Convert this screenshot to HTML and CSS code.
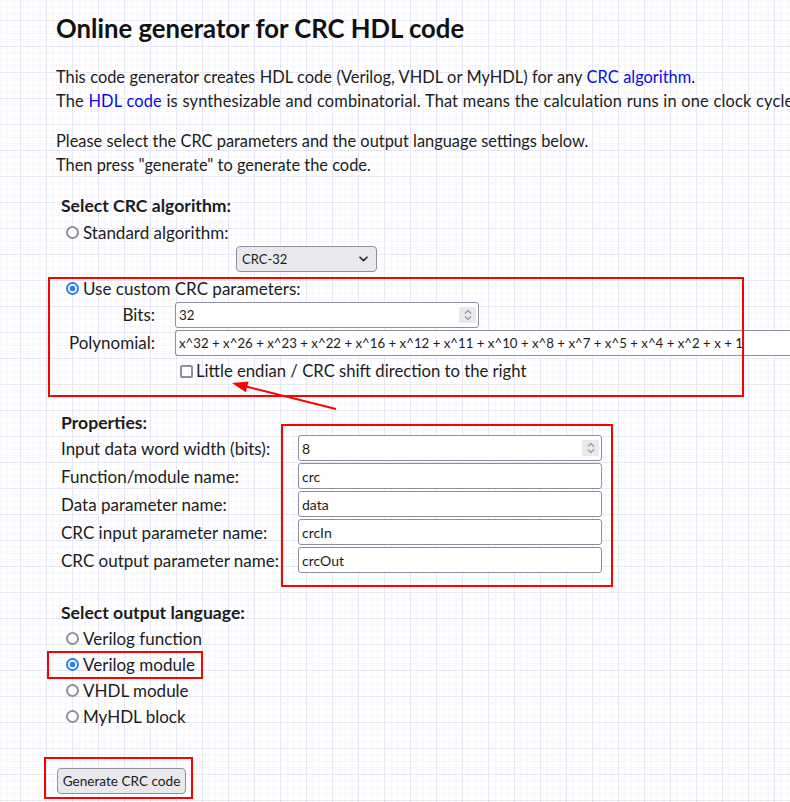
FILE: index.html
```html
<!DOCTYPE html>
<html lang="en">
<head>
<meta charset="utf-8">
<title>Online generator for CRC HDL code</title>
<link rel="stylesheet" href="styles.css">
</head>
<body>
<div class="page">
  <h1 class="title">Online generator for CRC HDL code</h1>
  <p class="intro">This code generator creates HDL code (Verilog, VHDL or MyHDL) for any <a href="#" class="link">CRC algorithm</a>.<br><span class="wide">The <a href="#" class="link">HDL code</a> is synthesizable and combinatorial. That means the calculation runs in one clock cycle.</span></p>
  <p class="intro second">Please select the CRC parameters and the output language settings below.<br>Then press "generate" to generate the code.</p>

  <form class="form">
    <div class="group">
      <div class="group-title">Select CRC algorithm:</div>
      <label class="opt"><input type="radio" name="alg" class="radio">Standard algorithm:</label>
      <div class="select-row">
        <div class="select"><span>CRC-32</span>
          <svg class="chev" width="9" height="6" viewBox="0 0 9 6"><path d="M1 1.2 L4.5 4.6 L8 1.2" fill="none" stroke="#222" stroke-width="1.6" stroke-linecap="round" stroke-linejoin="round"/></svg>
        </div>
      </div>
      <label class="opt"><input type="radio" name="alg" class="radio" checked>Use custom CRC parameters:</label>
      <div class="params">
        <span class="plabel">Bits:</span>
        <div class="field num bits"><input class="inp small" value="32">
          <span class="spin"><svg width="8" height="12" viewBox="0 0 8 12"><path d="M1 4.5 L4 1.5 L7 4.5 M1 7.5 L4 10.5 L7 7.5" fill="none" stroke="#8f8f9d" stroke-width="1.1"/></svg></span>
        </div>
        <span class="plabel">Polynomial:</span>
        <div class="field poly"><input class="inp poly-text" value="x^32 + x^26 + x^23 + x^22 + x^16 + x^12 + x^11 + x^10 + x^8 + x^7 + x^5 + x^4 + x^2 + x + 1"></div>
        <label class="check"><input type="checkbox" class="cbox">Little endian / CRC shift direction to the right</label>
      </div>
    </div>

    <div class="group props">
      <div class="group-title">Properties:</div>
      <div class="prop-grid">
        <span class="prop-label">Input data word width (bits):</span>
        <div class="field num"><input class="inp" value="8">
          <span class="spin"><svg width="8" height="12" viewBox="0 0 8 12"><path d="M1 4.5 L4 1.5 L7 4.5 M1 7.5 L4 10.5 L7 7.5" fill="none" stroke="#8f8f9d" stroke-width="1.1"/></svg></span>
        </div>
        <span class="prop-label">Function/module name:</span>
        <div class="field"><input class="inp" value="crc"></div>
        <span class="prop-label">Data parameter name:</span>
        <div class="field"><input class="inp" value="data"></div>
        <span class="prop-label">CRC input parameter name:</span>
        <div class="field"><input class="inp" value="crcIn"></div>
        <span class="prop-label">CRC output parameter name:</span>
        <div class="field"><input class="inp" value="crcOut"></div>
      </div>
    </div>

    <div class="group lang">
      <div class="group-title">Select output language:</div>
      <label class="opt"><input type="radio" name="lang" class="radio">Verilog function</label>
      <label class="opt"><input type="radio" name="lang" class="radio" checked>Verilog module</label>
      <label class="opt"><input type="radio" name="lang" class="radio">VHDL module</label>
      <label class="opt"><input type="radio" name="lang" class="radio">MyHDL block</label>
    </div>

    <button type="button" class="gen">Generate CRC code</button>
  </form>
</div>

<div class="mark m1"></div>
<div class="mark m2"></div>
<div class="mark m3"></div>
<div class="mark m4"></div>
<svg class="arrow" width="790" height="802" viewBox="0 0 790 802">
  <line x1="336" y1="409" x2="246" y2="386.5" stroke="#ff0000" stroke-width="2"/>
  <polygon points="232,383 248.6,381.4 245.8,392.2" fill="#ff0000"/>
</svg>
</body>
</html>
```
FILE: styles.css
```css
html {
  overflow: hidden;
  background-color: #ffffff;
  background-image:
    linear-gradient(to right, #e8e8f4 1px, transparent 1px),
    linear-gradient(to bottom, #e8e8f4 1px, transparent 1px),
    linear-gradient(to right, #f6f6fb 1px, transparent 1px),
    linear-gradient(to bottom, #f6f6fb 1px, transparent 1px);
  background-size: 26px 26px, 26px 26px, 6.5px 6.5px, 6.5px 6.5px;
  background-position: 20px 20px, 20px 20px, 20px 20px, 20px 20px;
}

body {
  margin: 0;
  position: relative;
  min-height: 802px;
  font-family: Lato, "Noto Sans", sans-serif;
  font-size: 16.4px;
  color: #1c1c1c;
}

.page {
  padding-left: 56px;
}

.title {
  margin: 12px 0 0;
  font-size: 25.7px;
  line-height: 32px;
  font-weight: 700;
  color: #111;
  white-space: nowrap;
}

.intro {
  margin: 21px 0 0;
  line-height: 24px;
  white-space: nowrap;
  word-spacing: 0.3px;
}

.intro .wide {
  letter-spacing: 0.15px;
}

.intro.second {
  margin-top: 16px;
  word-spacing: 0;
}

.link {
  color: #0a0ae8;
  text-decoration: none;
}

.form {
  margin-top: 16px;
  font-size: 17px;
}

.group {
  padding-left: 5px;
}

.group-title {
  font-weight: 700;
  font-size: 17.6px;
  line-height: 26px;
  white-space: nowrap;
}

.opt {
  display: flex;
  align-items: center;
  height: 26px;
  white-space: nowrap;
}

.radio {
  appearance: none;
  -webkit-appearance: none;
  box-sizing: border-box;
  width: 13px;
  height: 13px;
  margin: 1px 4px 0 5px;
  border: 2px solid #8f8f9d;
  border-radius: 50%;
  background: #fff;
  flex: none;
}

.radio:checked {
  border-color: #2f7fe8;
  background: radial-gradient(circle, #2f7fe8 0 2.6px, #fff 3.2px);
}

.select-row {
  height: 29px;
  padding-left: 175px;
}

.select {
  box-sizing: border-box;
  width: 141px;
  height: 26px;
  margin-top: 1px;
  border: 1px solid #8f8f9d;
  border-radius: 4px;
  background: #e9e9ed;
  display: flex;
  align-items: center;
  justify-content: space-between;
  padding: 0 8px 0 5px;
  font-size: 13px;
  color: #1c1c1c;
}

.chev {
  display: block;
}

.params {
  display: grid;
  grid-template-columns: 89px max-content;
  grid-auto-rows: 28px;
  column-gap: 20px;
  margin-left: 5px;
}

.plabel {
  text-align: right;
  line-height: 28px;
  white-space: nowrap;
}

.field {
  box-sizing: border-box;
  display: flex;
  align-items: center;
  width: 304px;
  height: 26px;
  margin-top: 1px;
  padding: 0 2px 0 3px;
  border: 1px solid #8f8f9d;
  border-radius: 3px;
  background: #fff;
}

.field.poly {
  width: 650px;
  border-right: 0;
  border-radius: 3px 0 0 3px;
}

.inp {
  flex: 1;
  min-width: 0;
  border: 0;
  outline: 0;
  padding: 0;
  margin: 0;
  background: transparent;
  font-family: Lato, "Noto Sans", sans-serif;
  font-size: 14px;
  color: #1c1c1c;
}

.inp.small {
  font-size: 13.3px;
}

.inp.poly-text {
  font-size: 13.25px;
}

.spin {
  flex: none;
  width: 17px;
  height: 16px;
  border-radius: 2px;
  background: #e9e9ed;
  display: flex;
  align-items: center;
  justify-content: center;
}

.check {
  grid-column: 2;
  display: flex;
  align-items: center;
  height: 28px;
  white-space: nowrap;
  font-size: 16.7px;
}

.cbox {
  appearance: none;
  -webkit-appearance: none;
  box-sizing: border-box;
  width: 13px;
  height: 13px;
  margin: 1px 3px 0 5px;
  border: 2px solid #8f8f9d;
  border-radius: 2px;
  background: #fff;
  flex: none;
}

.props {
  margin-top: 27px;
}

.props .group-title {
  line-height: 22px;
}

.lang .group-title {
  line-height: 24px;
}

.prop-grid {
  display: grid;
  grid-template-columns: 217px 304px;
  grid-auto-rows: 28px;
  column-gap: 20px;
}

.prop-label {
  line-height: 28px;
  padding-top: 1px;
  white-space: nowrap;
}

.lang {
  margin-top: 27px;
}

.gen {
  display: block;
  box-sizing: border-box;
  margin: 39px 0 0 1px;
  width: 129px;
  height: 26px;
  padding: 0;
  border: 1px solid #8f8f9d;
  border-radius: 4px;
  background: #e9e9ed;
  font-family: Lato, "Noto Sans", sans-serif;
  font-size: 13.6px;
  color: #1c1c1c;
}

.mark {
  position: absolute;
  box-sizing: border-box;
  border: 2px solid #ff0000;
  pointer-events: none;
}

.m1 { left: 48px; top: 277px; width: 696px; height: 120px; }
.m2 { left: 281px; top: 424px; width: 332px; height: 163px; }
.m3 { left: 47px; top: 651px; width: 156px; height: 28px; }
.m4 { left: 44px; top: 757px; width: 149px; height: 42px; }

.arrow {
  position: absolute;
  left: 0;
  top: 0;
  pointer-events: none;
}
```
